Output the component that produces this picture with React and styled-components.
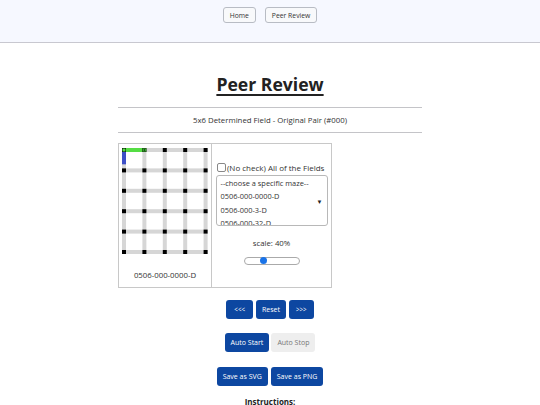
import React from "react";
import styled, { createGlobalStyle } from "styled-components";

const GlobalStyle = createGlobalStyle`
  html, body {
    margin: 0;
    padding: 0;
    background: #fff;
    font-family: "Open Sans", "Noto Sans", sans-serif;
    color: #222;
  }
`;

const Header = styled.header`
  height: 43px;
  background: #f6f8ff;
  border-bottom: 1px solid #c8c8d0;
  display: flex;
  justify-content: center;
  align-items: flex-start;
  gap: 9px;
  padding-top: 7px;
  box-sizing: border-box;
`;

const NavButton = styled.button`
  font-family: inherit;
  font-size: 6.8px;
  height: 16px;
  padding: 0 6px;
  background: #f8f9fb;
  border: 1px solid #b8bcc4;
  border-radius: 3px;
  color: #333;
`;

const Main = styled.main`
  display: flex;
  flex-direction: column;
  align-items: center;
`;

const Column = styled.div`
  width: 304px;
  display: flex;
  flex-direction: column;
  align-items: center;
`;

const Title = styled.h1`
  margin: 29px 0 0;
  font-size: 17.6px;
  font-weight: 700;
  text-decoration: underline;
  text-decoration-thickness: 2px;
  text-underline-offset: 3px;
  color: #222;
  line-height: 24px;
`;

const Rule = styled.div`
  align-self: stretch;
  height: 1px;
  background: #c4c4c8;
`;

const Subtitle = styled.div`
  font-size: 7.8px;
  color: #333;
  line-height: 24px;
`;

const Panel = styled.div`
  align-self: flex-start;
  margin-top: 10px;
  display: grid;
  grid-template-columns: 92px 120px;
  border: 1px solid #c8c8c8;
`;

const Cell = styled.div`
  display: flex;
  flex-direction: column;
  align-items: ${(p) => (p.$left ? "flex-start" : "center")};
  border-left: ${(p) => (p.$left ? "none" : "1px solid #c8c8c8")};
  height: 143px;
  box-sizing: border-box;
`;

const MazeWrap = styled.div`
  padding: 4px 0 0 3px;
`;

const Caption = styled.div`
  align-self: center;
  margin-top: 11px;
  font-size: 7.8px;
  color: #333;
`;

const CheckRow = styled.label`
  margin-top: 18px;
  align-self: flex-start;
  padding-left: 5px;
  display: flex;
  align-items: center;
  font-size: 8px;
  white-space: nowrap;
  color: #333;
`;

const Box = styled.span`
  width: 7px;
  height: 7px;
  border: 1px solid #888;
  border-radius: 2px;
  margin-right: 1px;
  background: #fff;
`;

const ListBox = styled.div`
  position: relative;
  margin-top: 2px;
  width: 112px;
  height: 51px;
  border: 1px solid #b8b8b8;
  border-radius: 3px;
  overflow: hidden;
  box-sizing: border-box;
  padding: 1px 0 0 4px;
  font-size: 7.4px;
  line-height: 13.4px;
  color: #333;
`;

const Option = styled.div`
  white-space: nowrap;
`;

const Arrow = styled.span`
  position: absolute;
  right: 4px;
  top: 20px;
  font-size: 6px;
  color: #222;
`;

const ScaleLabel = styled.div`
  margin-top: 12px;
  font-size: 7.8px;
  color: #333;
`;

const Slider = styled.div`
  position: relative;
  margin-top: 9px;
  width: 54px;
  height: 6px;
  border: 1px solid #aaa;
  border-radius: 4px;
  background: #fff;
`;

const Thumb = styled.span`
  position: absolute;
  left: 15px;
  top: -1px;
  width: 7px;
  height: 7px;
  border-radius: 50%;
  background: #1a73e8;
`;

const ButtonRow = styled.div`
  display: flex;
  gap: ${(p) => p.$gap || 3}px;
  margin-top: ${(p) => p.$top}px;
`;

const ActionButton = styled.button`
  font-family: inherit;
  font-size: ${(p) => p.$size || 7}px;
  height: 19px;
  padding: 0 ${(p) => p.$pad || 6}px;
  border: none;
  border-radius: 3px;
  background: ${(p) => (p.$muted ? "#eeeeee" : "#0d47a1")};
  color: ${(p) => (p.$muted ? "#777" : "#fff")};
`;

const Instructions = styled.div`
  margin-top: 10px;
  font-size: 8px;
  font-weight: 700;
  color: #222;
`;

const S = 20.4;
const COLS = 5;
const ROWS = 6;

function Maze() {
  const w = (COLS - 1) * S + 4;
  const h = (ROWS - 1) * S + 4;
  const walls = [];
  for (let r = 0; r < ROWS; r++) {
    walls.push(<rect key={"h" + r} x={0} y={r * S} width={w} height={4} fill="#d6d6d6" />);
  }
  for (let c = 0; c < COLS; c++) {
    walls.push(<rect key={"v" + c} x={c * S} y={0} width={4} height={h} fill="#d6d6d6" />);
  }
  const posts = [];
  for (let r = 0; r < ROWS; r++) {
    for (let c = 0; c < COLS; c++) {
      posts.push(<rect key={r + "-" + c} x={c * S} y={r * S} width={4} height={4} fill="#000" />);
    }
  }
  return (
    <svg width={w} height={h} viewBox={`0 0 ${w} ${h}`}>
      {walls}
      <rect x={0} y={0} width={S + 4} height={4} fill="#55dd44" />
      <rect x={0} y={0} width={4} height={S * 0.8} fill="#3d4fc7" />
      {posts}
      <rect x={0.5} y={0.5} width={3} height={3} fill="#55dd44" />
      <rect x={S + 0.5} y={0.5} width={3} height={3} fill="#55dd44" />
      <path d={`M${S + 2} 0.8 V3.2 M${S + 0.8} 2 H${S + 3.2}`} stroke="#0a3a0a" strokeWidth={0.8} />
    </svg>
  );
}

export default function App() {
  return (
    <>
      <GlobalStyle />
      <Header>
        <NavButton>Home</NavButton>
        <NavButton>Peer Review</NavButton>
      </Header>
      <Main>
        <Column>
          <Title>Peer Review</Title>
          <Rule style={{ marginTop: 11 }} />
          <Subtitle>5x6 Determined Field - Original Pair (#000)</Subtitle>
          <Rule />
          <Panel>
            <Cell $left>
              <MazeWrap>
                <Maze />
              </MazeWrap>
              <Caption>0506-000-0000-D</Caption>
            </Cell>
            <Cell>
              <CheckRow>
                <Box />
                (No check) All of the Fields
              </CheckRow>
              <ListBox>
                <Option>--choose a specific maze--</Option>
                <Option>0506-000-0000-D</Option>
                <Option>0506-000-3-D</Option>
                <Option>0506-000-32-D</Option>
                <Option>0506-000-33-D</Option>
                <Arrow>▼</Arrow>
              </ListBox>
              <ScaleLabel>scale: 40%</ScaleLabel>
              <Slider>
                <Thumb />
              </Slider>
            </Cell>
          </Panel>
        </Column>
        <ButtonRow $top={12}>
          <ActionButton $size={6.2} $pad={8}>&lt;&lt;&lt;</ActionButton>
          <ActionButton>Reset</ActionButton>
          <ActionButton $size={6.2} $pad={7}>&gt;&gt;&gt;</ActionButton>
        </ButtonRow>
        <ButtonRow $top={14} $gap={2}>
          <ActionButton>Auto Start</ActionButton>
          <ActionButton $muted>Auto Stop</ActionButton>
        </ButtonRow>
        <ButtonRow $top={15}>
          <ActionButton>Save as SVG</ActionButton>
          <ActionButton>Save as PNG</ActionButton>
        </ButtonRow>
        <Instructions>Instructions:</Instructions>
      </Main>
    </>
  );
}
